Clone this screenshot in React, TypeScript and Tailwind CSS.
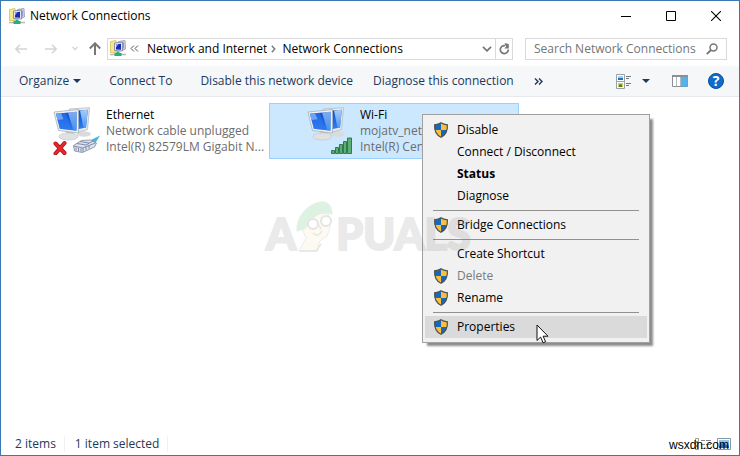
import type { ReactNode } from "react";

interface MenuEntry {
  label: string;
  shield?: boolean;
  bold?: boolean;
  disabled?: boolean;
  active?: boolean;
}

const MENU_GROUPS: MenuEntry[][] = [
  [
    { label: "Disable", shield: true },
    { label: "Connect / Disconnect" },
    { label: "Status", bold: true },
    { label: "Diagnose" },
  ],
  [{ label: "Bridge Connections", shield: true }],
  [
    { label: "Create Shortcut" },
    { label: "Delete", shield: true, disabled: true },
    { label: "Rename", shield: true },
  ],
  [{ label: "Properties", shield: true, active: true }],
];

function NetworkFolderIcon() {
  return (
    <svg width="16" height="17" viewBox="0 0 16 17" className="shrink-0" aria-hidden>
      <path d="M.5 1.500 6 .5v12H.5z" fill="#f6e68c" stroke="#e0cb66" />
      <path d="M8.500 1.500 15 .5 15.500 9 13 10z" fill="#cfd3e0" stroke="#a3a8bb" />
      <path d="M10 2.500h4v6h-4z" fill="#8d98d2" />
      <path d="m4.500 3 8-1v9l-8-.5z" fill="#e4e7f0" stroke="#8b91a8" />
      <path d="m6 4.500 5-.7v6L6 9.500z" fill="#1c28b8" />
      <path d="M6 4.500 8.500 4 6 7.500z" fill="#8fa6f4" />
      <path d="M0 14.500h16" stroke="#b7bbbb" strokeWidth="1.600" />
      <path d="M6.500 11.500h3V13h2v3H4.500v-3h2z" fill="#20b07c" />
    </svg>
  );
}

function ShieldIcon() {
  return (
    <svg width="16" height="16" viewBox="0 0 16 16" aria-hidden>
      <path d="M8 .8C6.200 2 4 2.600 1.600 2.800 1.300 8.600 3 13 8 15.300 13 13 14.700 8.600 14.400 2.800 12 2.600 9.800 2 8 .8z" fill="#fbbf3c" />
      <path d="M8 .8C6.200 2 4 2.600 1.600 2.800 1.500 4.700 1.600 6.400 2 8h6z" fill="#1668bd" />
      <path d="M8 8h6c-.8 3.300-2.700 5.900-6 7.300z" fill="#1668bd" />
      <path d="M8 .8C6.200 2 4 2.600 1.600 2.800 1.300 8.600 3 13 8 15.300 13 13 14.700 8.600 14.400 2.800 12 2.600 9.800 2 8 .8z" fill="none" stroke="#4d5252" strokeWidth="1.200" />
    </svg>
  );
}

function AdapterIcon({ children }: { children: ReactNode }) {
  return (
    <svg width="48" height="48" viewBox="0 0 48 48" className="shrink-0" aria-hidden>
      <defs>
        <linearGradient id="front" x1="0" y1="0" x2="0" y2="1">
          <stop offset="0" stopColor="#0d49cf" />
          <stop offset="1" stopColor="#2f80f2" />
        </linearGradient>
        <linearGradient id="glare" x1="0" y1="0" x2="0" y2="1">
          <stop offset="0" stopColor="#a5cdf8" />
          <stop offset="1" stopColor="#4b97f2" />
        </linearGradient>
      </defs>
      <ellipse cx="31" cy="27" rx="7" ry="2.800" fill="#d9dbdd" />
      <path d="m16 2 20.500-1.300-2 21.800-9 2.500z" fill="#e9ebee" stroke="#b5babf" strokeWidth=".8" />
      <path d="M18 4 34.800 2.800 33 20.500l-8 1.800z" fill="url(#front)" />
      <path d="m27 3.400 7.800-.6L33 20.500l-2.500.6z" fill="url(#glare)" />
      <path d="m13 24 7-1 1 6-8 1z" fill="#c6c9cd" />
      <ellipse cx="15.500" cy="29.500" rx="9.500" ry="3.600" fill="#dfe1e3" stroke="#c0c3c6" strokeWidth=".6" />
      <path d="m1 5 24.500-2.500L25.500 26 5.500 23.500z" fill="#eef0f2" stroke="#aab0b5" strokeWidth=".8" />
      <path d="m3 6.700 20.800-2L23.500 23.800 6.800 21.700z" fill="url(#front)" />
      <path d="m3 6.700 10-1 5 17.400-11.200-1.400z" fill="#2f7af0" opacity=".6" />
      <path d="m3 6.700 5-.5 2.500 6L4.500 13z" fill="#8cbcf8" opacity=".7" />
      <path d="m15 5.500 8.800-.8-.3 19.100-3-.4z" fill="url(#glare)" opacity=".75" />
      {children}
    </svg>
  );
}

function UnpluggedMark() {
  return (
    <>
      <path d="m2.500 36.500 9 9.500m0-10-9 10.500" stroke="#a90f12" strokeWidth="4" strokeLinecap="round" />
      <path d="m2.500 36.500 9 9.500m0-10-9 10.500" stroke="#e5282c" strokeWidth="2.600" strokeLinecap="round" />
      <path d="m36 34 11-5.500-4 6.500-5 2z" fill="#46b6dc" />
      <path d="m20.500 38.500 8-5 9-.5 6 3-2 4-12 5.500-8-1.500z" fill="#dce2ec" stroke="#8791a8" strokeWidth=".9" />
      <path d="m20.500 39 9 2 13-5M30 41v4M24 36.500l9 1.500 7-4M27 34.500l9 1.500M23 40.500v3m2.500-2.500v3M28 41.500v3M33 40v3m3-4.500v3" stroke="#7583a3" strokeWidth=".9" fill="none" />
    </>
  );
}

function SignalMark() {
  return (
    <g fill="#5aaf76" stroke="#27703f" strokeWidth=".9">
      <path d="M24.500 43.500h3v3h-3z" />
      <path d="M28.500 40.500h3v6h-3z" />
      <path d="M32.500 37.500h3v9h-3z" />
      <path d="M36.500 34.500h3v12h-3z" />
      <path d="M40.500 31h4v15.500h-4z" />
    </g>
  );
}

function Cursor() {
  return (
    <svg width="13" height="20" viewBox="0 0 13 20" className="pointer-events-none absolute left-[113px] top-[209px]" aria-hidden>
      <path d="M1 1v15.500l3.600-3.400 2.500 5.700 2.500-1.100-2.500-5.500H12z" fill="#fff" stroke="#111" strokeWidth="1" />
    </svg>
  );
}

function TitleBar() {
  return (
    <header className="flex h-[30px] items-center pl-2">
      <NetworkFolderIcon />
      <h1 className="ml-[5px] text-black">Network Connections</h1>
      <div className="ml-auto flex h-full">
        <button aria-label="Minimize" className="flex w-[45px] items-center justify-center">
          <svg width="10" height="10" viewBox="0 0 10 10"><path d="M0 5.500h10" stroke="#000" /></svg>
        </button>
        <button aria-label="Maximize" className="flex w-[45px] items-center justify-center">
          <svg width="10" height="10" viewBox="0 0 10 10"><path d="M.5.5h9v9h-9z" fill="none" stroke="#000" /></svg>
        </button>
        <button aria-label="Close" className="flex w-[46px] items-center justify-center">
          <svg width="10" height="10" viewBox="0 0 10 10"><path d="m0 0 10 10M10 0 0 10" stroke="#000" strokeWidth="1.100" /></svg>
        </button>
      </div>
    </header>
  );
}

function AddressRow() {
  return (
    <nav className="flex h-[35px] items-center pl-3 pr-3">
      <button aria-label="Back" className="flex w-4 justify-center" disabled>
        <svg width="12" height="10" viewBox="0 0 12 10"><path d="M5 .7.900 5 5 9.300M1 5h11" fill="none" stroke="#d4d4d4" strokeWidth="1.500" /></svg>
      </button>
      <button aria-label="Forward" className="ml-3.5 flex w-4 justify-center" disabled>
        <svg width="12" height="10" viewBox="0 0 12 10"><path d="M7 .7 11.100 5 7 9.300M11 5H0" fill="none" stroke="#d4d4d4" strokeWidth="1.500" /></svg>
      </button>
      <button aria-label="Recent locations" className="ml-2 flex w-4 justify-center" disabled>
        <svg width="6" height="5" viewBox="0 0 6 5"><path d="m.5 1 2.500 2.500L5.500 1" fill="none" stroke="#d4d4d4" strokeWidth="1.400" /></svg>
      </button>
      <button aria-label="Up" className="ml-1 flex w-4 justify-center">
        <svg width="12" height="13" viewBox="0 0 12 13"><path d="M.8 6.500 6 1.300l5.200 5.200M6 1.500V13" fill="none" stroke="#777" strokeWidth="2" /></svg>
      </button>
      <div className="ml-1 flex h-[22px] min-w-0 flex-1 items-center border border-[#d9d9d9] pl-0.5 text-black">
        <NetworkFolderIcon />
        <svg width="9" height="7" viewBox="0 0 9 7" className="ml-1 shrink-0" aria-hidden>
          <path d="M4 .5 1 3.500l3 3M8 .5 5 3.500l3 3" fill="none" stroke="#555" />
        </svg>
        <a href="#internet" className="ml-2 truncate">Network and Internet</a>
        <svg width="5" height="8" viewBox="0 0 5 8" className="ml-1 shrink-0" aria-hidden>
          <path d="m.8.8 3 3.200-3 3.200" fill="none" stroke="#777" strokeWidth="1.400" />
        </svg>
        <a href="#connections" className="ml-1.5 truncate">Network Connections</a>
        <button aria-label="Previous locations" className="ml-auto flex h-full w-4 items-center justify-center">
          <svg width="10" height="6" viewBox="0 0 10 6"><path d="m1 .8 4 4 4-4" fill="none" stroke="#777" strokeWidth="1.800" /></svg>
        </button>
        <button aria-label="Refresh" className="flex h-full w-[17px] items-center justify-center border-l border-[#d9d9d9]">
          <svg width="11" height="12" viewBox="0 0 11 12">
            <path d="M9.300 6.500A4 4 0 1 1 6 2.600" fill="none" stroke="#777" strokeWidth="1.700" />
            <path d="M5.500 0 9.800 1v4.500H5.300L7 3.800z" fill="#777" />
          </svg>
        </button>
      </div>
      <label className="ml-3 flex h-[22px] w-[202px] items-center border border-[#d9d9d9] pl-2 pr-2">
        <input
          aria-label="Search Network Connections"
          placeholder="Search Network Connections"
          className="min-w-0 flex-1 bg-transparent outline-none placeholder:text-[#757575]"
        />
        <svg width="12" height="12" viewBox="0 0 12 12" className="shrink-0" aria-hidden>
          <circle cx="7.500" cy="4.500" r="3.500" fill="none" stroke="#777" strokeWidth="1.500" />
          <path d="M5 7 .8 11.200" stroke="#777" strokeWidth="1.900" />
        </svg>
      </label>
    </nav>
  );
}

function CommandBar() {
  return (
    <div className="flex h-[31px] items-center border-b border-[#e6eaee] bg-[#f5f7f9] pl-[18px] pr-[15px] text-[#1e395b]">
      <button className="flex items-center gap-1">
        Organize
        <svg width="8" height="4" viewBox="0 0 8 4" aria-hidden><path d="M0 0h8L4 4z" fill="#1e395b" /></svg>
      </button>
      <button className="ml-7 whitespace-nowrap">Connect To</button>
      <button className="ml-7 whitespace-nowrap">Disable this network device</button>
      <button className="ml-5 whitespace-nowrap">Diagnose this connection</button>
      <button aria-label="More commands" className="ml-5">
        <svg width="9" height="7" viewBox="0 0 9 7"><path d="m1 .5 3 3-3 3M5 .5l3 3-3 3" fill="none" stroke="#1e395b" strokeWidth="1.400" /></svg>
      </button>
      <button aria-label="Change your view" className="ml-auto flex items-center gap-2.5">
        <svg width="16" height="15" viewBox="0 0 16 15">
          <path d="M.5.5h8v7h-8zM.5 7.500h8v7h-8z" fill="#fff" stroke="#9a9fa5" />
          <path d="M2 2h5v4H2z" fill="#9fd0f5" />
          <path d="M2 4h5v2H2z" fill="#2d6fae" />
          <path d="M2 9h5v4H2z" fill="#c2cf5c" />
          <path d="M3 10.500h3V13H3z" fill="#4b7a52" />
          <path d="M10 2.500h5M10 4.500h3M10 9.500h5M10 11.500h3" stroke="#72777e" />
        </svg>
        <svg width="8" height="4" viewBox="0 0 8 4"><path d="M0 0h8L4 4z" fill="#1e395b" /></svg>
      </button>
      <button aria-label="Show the preview pane" className="ml-[22px]">
        <svg width="16" height="12" viewBox="0 0 16 12">
          <path d="M.5.5h15v11H.5z" fill="#fff" stroke="#8a8f95" />
          <path d="M0 0h16v2H0z" fill="#8a8f95" />
          <path d="M9 2h6.500v9.500H9z" fill="#55b2f0" />
          <path d="M4.500 2v9M8.500 2v9" stroke="#b3b8bd" />
        </svg>
      </button>
      <button aria-label="Help" className="ml-5 flex size-4 items-center justify-center rounded-full border border-[#0a4f9c] bg-[#0f6cc9] text-sm font-bold leading-4 text-white">
        ?
      </button>
    </div>
  );
}

function ContextMenu() {
  return (
    <div role="menu" className="absolute left-[152px] top-2.5 z-10 w-[228px] border border-[#a0a0a0] bg-[#f1f1f1] px-0.5 py-1 text-black shadow-[4px_4px_2px_-1px_rgba(0,0,0,0.45)]">
      {MENU_GROUPS.map((group, i) => (
        <div key={group[0].label}>
          {i > 0 && <hr className="mx-2 my-[3px] border-[#919191]" />}
          {group.map((item) => (
            <button
              key={item.label}
              role="menuitem"
              disabled={item.disabled}
              className={`flex h-[22px] w-full items-center pl-2 text-left
                          ${item.active ? "bg-[#dadada]" : ""}
                          ${item.bold ? "font-bold" : ""}
                          ${item.disabled ? "text-[#7a7a7a]" : ""}`}
            >
              <span className="mr-2 w-4">{item.shield && <ShieldIcon />}</span>
              {item.label}
            </button>
          ))}
        </div>
      ))}
      <Cursor />
    </div>
  );
}

interface TileProps {
  name: string;
  status: string;
  device: string;
  selected?: boolean;
  mark: ReactNode;
  children?: ReactNode;
}

function AdapterTile({ name, status, device, selected, mark, children }: TileProps) {
  return (
    <article
      className={`relative flex h-14 w-[250px] items-center border pl-[37px]
                  ${selected ? "border-[#99d1ff] bg-[#cce8ff]" : "border-transparent"}`}
    >
      <AdapterIcon>{mark}</AdapterIcon>
      <div className="ml-[5px] min-w-0 flex-1 whitespace-nowrap leading-4">
        <h2 className="text-black">{name}</h2>
        <p className="text-[#6d6d6d]">{status}</p>
        <p className="text-[#6d6d6d]">{device}</p>
      </div>
      {children}
    </article>
  );
}

function Watermark() {
  return (
    <div className="pointer-events-none absolute left-[265px] top-[103px] z-20 flex items-end text-[43px] font-black leading-[60px] text-[#777] opacity-15 [-webkit-text-stroke:2px_#777] font-[Lato,sans-serif]">
      <span>A</span>
      <svg width="40" height="52" viewBox="0 0 40 52" className="mb-3" aria-hidden>
        <path d="M6 18 30 10l3 6 1 12-3 8-8 6-1 9H3l7-13-4-9z" fill="#f4dfae" stroke="#888" />
        <path d="M1 31C0 18 10 5 24 2c7-1 12 3 12 12-9-2-16 0-21 6-2 4-4 7-7 9z" fill="#27ae50" stroke="#4b9b65" />
        <circle cx="17" cy="24" r="5" fill="#fff" stroke="#555" strokeWidth="2" />
        <circle cx="30" cy="21" r="5" fill="#fff" stroke="#555" strokeWidth="2" />
        <path d="M17 33q5 5 9-2M23 25l2 4M3 51h17l5-7" fill="none" stroke="#555" strokeWidth="1.500" />
      </svg>
      <span>PUALS</span>
    </div>
  );
}

function StatusBar() {
  return (
    <footer className="relative flex h-[22px] items-center pl-3.5 pr-2 text-[#1e395b]">
      <span className="border-r border-[#f0f0f0] pr-2">2 items</span>
      <span className="border-r border-[#f0f0f0] pl-2.5 pr-2">1 item selected</span>
      <button aria-label="Details view" className="ml-auto">
        <svg width="16" height="12" viewBox="0 0 16 12">
          <path d="M.5.5h3v3h-3zM.5 4.500h3v3h-3zM.5 8.500h3v3h-3z" fill="#fff" stroke="#999" />
          <path d="M6 2.500h4m1 0h5M6 6.500h4m1 0h5M6 10.500h4m1 0h5" stroke="#888" />
        </svg>
      </button>
      <button aria-label="Large icons view" className="ml-1.5">
        <svg width="14" height="12" viewBox="0 0 14 12">
          <path d="M.5.5h13v11H.5z" fill="#fff" stroke="#8797a5" />
          <path d="M2 2h10v8H2z" fill="#8ec5f2" />
          <path d="M2 8l4-3 6 3v2H2z" fill="#2d6ead" />
        </svg>
      </button>
      <span className="absolute right-2.5 top-1 font-[Liberation_Sans,sans-serif] text-black">wsxdn.com</span>
    </footer>
  );
}

export default function App() {
  return (
    <div className="flex min-h-screen flex-col border border-[#3a78b5] bg-white text-xs font-[Open_Sans,sans-serif]">
      <TitleBar />
      <AddressRow />
      <CommandBar />
      <main className="relative flex flex-1 flex-wrap content-start gap-1 pl-3.5 pt-1.5">
        <AdapterTile
          name="Ethernet"
          status="Network cable unplugged"
          device="Intel(R) 82579LM Gigabit N..."
          mark={<UnpluggedMark />}
        />
        <AdapterTile
          name="Wi-Fi"
          status="mojatv_net_"
          device="Intel(R) Centrino"
          selected
          mark={<SignalMark />}
        >
          <ContextMenu />
        </AdapterTile>
        <Watermark />
      </main>
      <StatusBar />
    </div>
  );
}
